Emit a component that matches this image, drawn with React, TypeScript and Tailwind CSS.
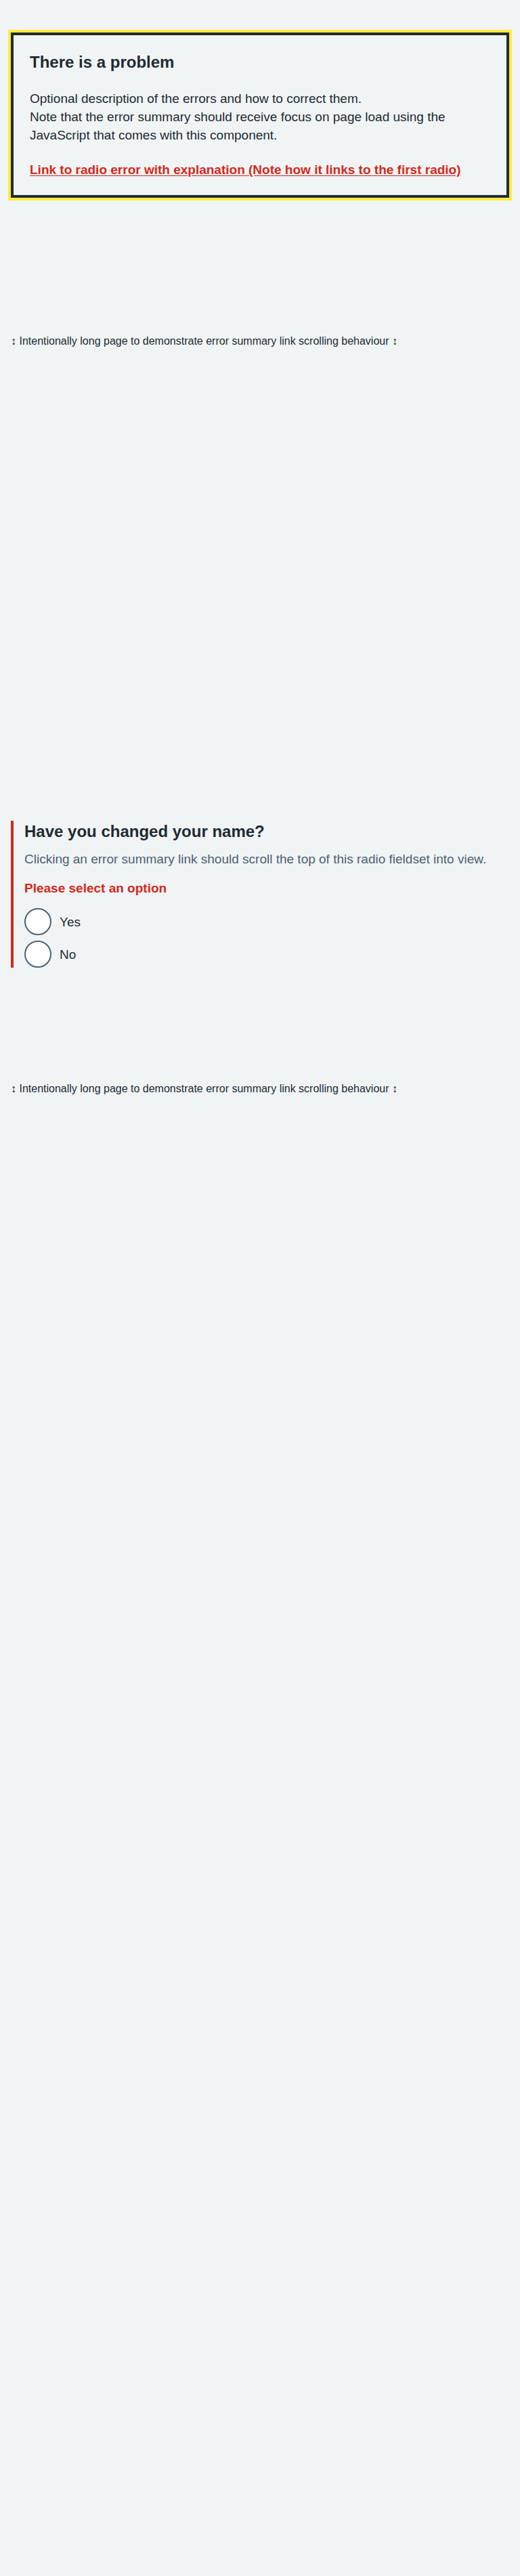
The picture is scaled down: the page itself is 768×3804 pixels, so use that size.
import { useEffect, useRef } from "react";

const font = { fontFamily: '"Liberation Sans", Arial, sans-serif' };

const LongPageNote = () => (
  <p className="text-[16px] leading-[24px] text-[#212b32]">
    ↕ Intentionally long page to demonstrate error summary link scrolling behaviour ↕
  </p>
);

const ErrorSummary = () => {
  const boxRef = useRef<HTMLDivElement>(null);

  // summary gets focus on load, like the real component
  useEffect(() => {
    boxRef.current?.focus();
  }, []);

  return (
    <div
      ref={boxRef}
      tabIndex={-1}
      role="alert"
      aria-labelledby="error-summary-title"
      className="border-4 border-[#212b32] p-6 shadow-[0_0_0_4px_#ffeb3b] outline-none"
    >
      <h2 id="error-summary-title" className="mb-6 text-[24px] font-bold leading-[32px] text-[#212b32]">
        There is a problem
      </h2>
      <p className="mb-6 text-[19px] leading-[27px] text-[#212b32]">
        Optional description of the errors and how to correct them.
        <br />
        Note that the error summary should receive focus on page load using the JavaScript that comes with this
        component.
      </p>
      <ul>
        <li>
          <a
            href="#example-1"
            className="text-[19px] font-bold leading-[27px] text-[#d5281b] underline underline-offset-[2px]"
          >
            Link to radio error with explanation (Note how it links to the first radio)
          </a>
        </li>
      </ul>
    </div>
  );
};

const RadioFieldset = () => (
  <fieldset className="border-l-4 border-[#d5281b] pl-4">
    <legend className="contents">
      <h1 className="text-[24px] font-bold leading-[32px] text-[#212b32]">Have you changed your name?</h1>
    </legend>
    <div className="mt-[11px] text-[19px] leading-[27px] text-[#4c6272]">
      Clicking an error summary link should scroll the top of this radio fieldset into view.
    </div>
    <span className="mt-4 block text-[19px] font-bold leading-[27px] text-[#d5281b]">Please select an option</span>
    <div className="mt-4 flex flex-col gap-2">
      {["Yes", "No"].map((label, i) => (
        <label key={label} className="flex items-center gap-3">
          <input
            id={i === 0 ? "example-1" : `example-${i + 1}`}
            type="radio"
            name="example"
            className="h-10 w-10 appearance-none rounded-full border-2 border-[#4c6272] bg-white"
          />
          <span className="text-[19px] leading-[27px] text-[#212b32]">{label}</span>
        </label>
      ))}
    </div>
  </fieldset>
);

export default function App() {
  return (
    <div style={font} className="flow-root min-h-[3804px] bg-[#f0f4f5] px-4 pt-12">
      <ErrorSummary />
      <div className="mt-[200px]">
        <LongPageNote />
      </div>
      <div className="mt-[696px]">
        <RadioFieldset />
      </div>
      <div className="mt-[167px]">
        <LongPageNote />
      </div>
    </div>
  );
}
